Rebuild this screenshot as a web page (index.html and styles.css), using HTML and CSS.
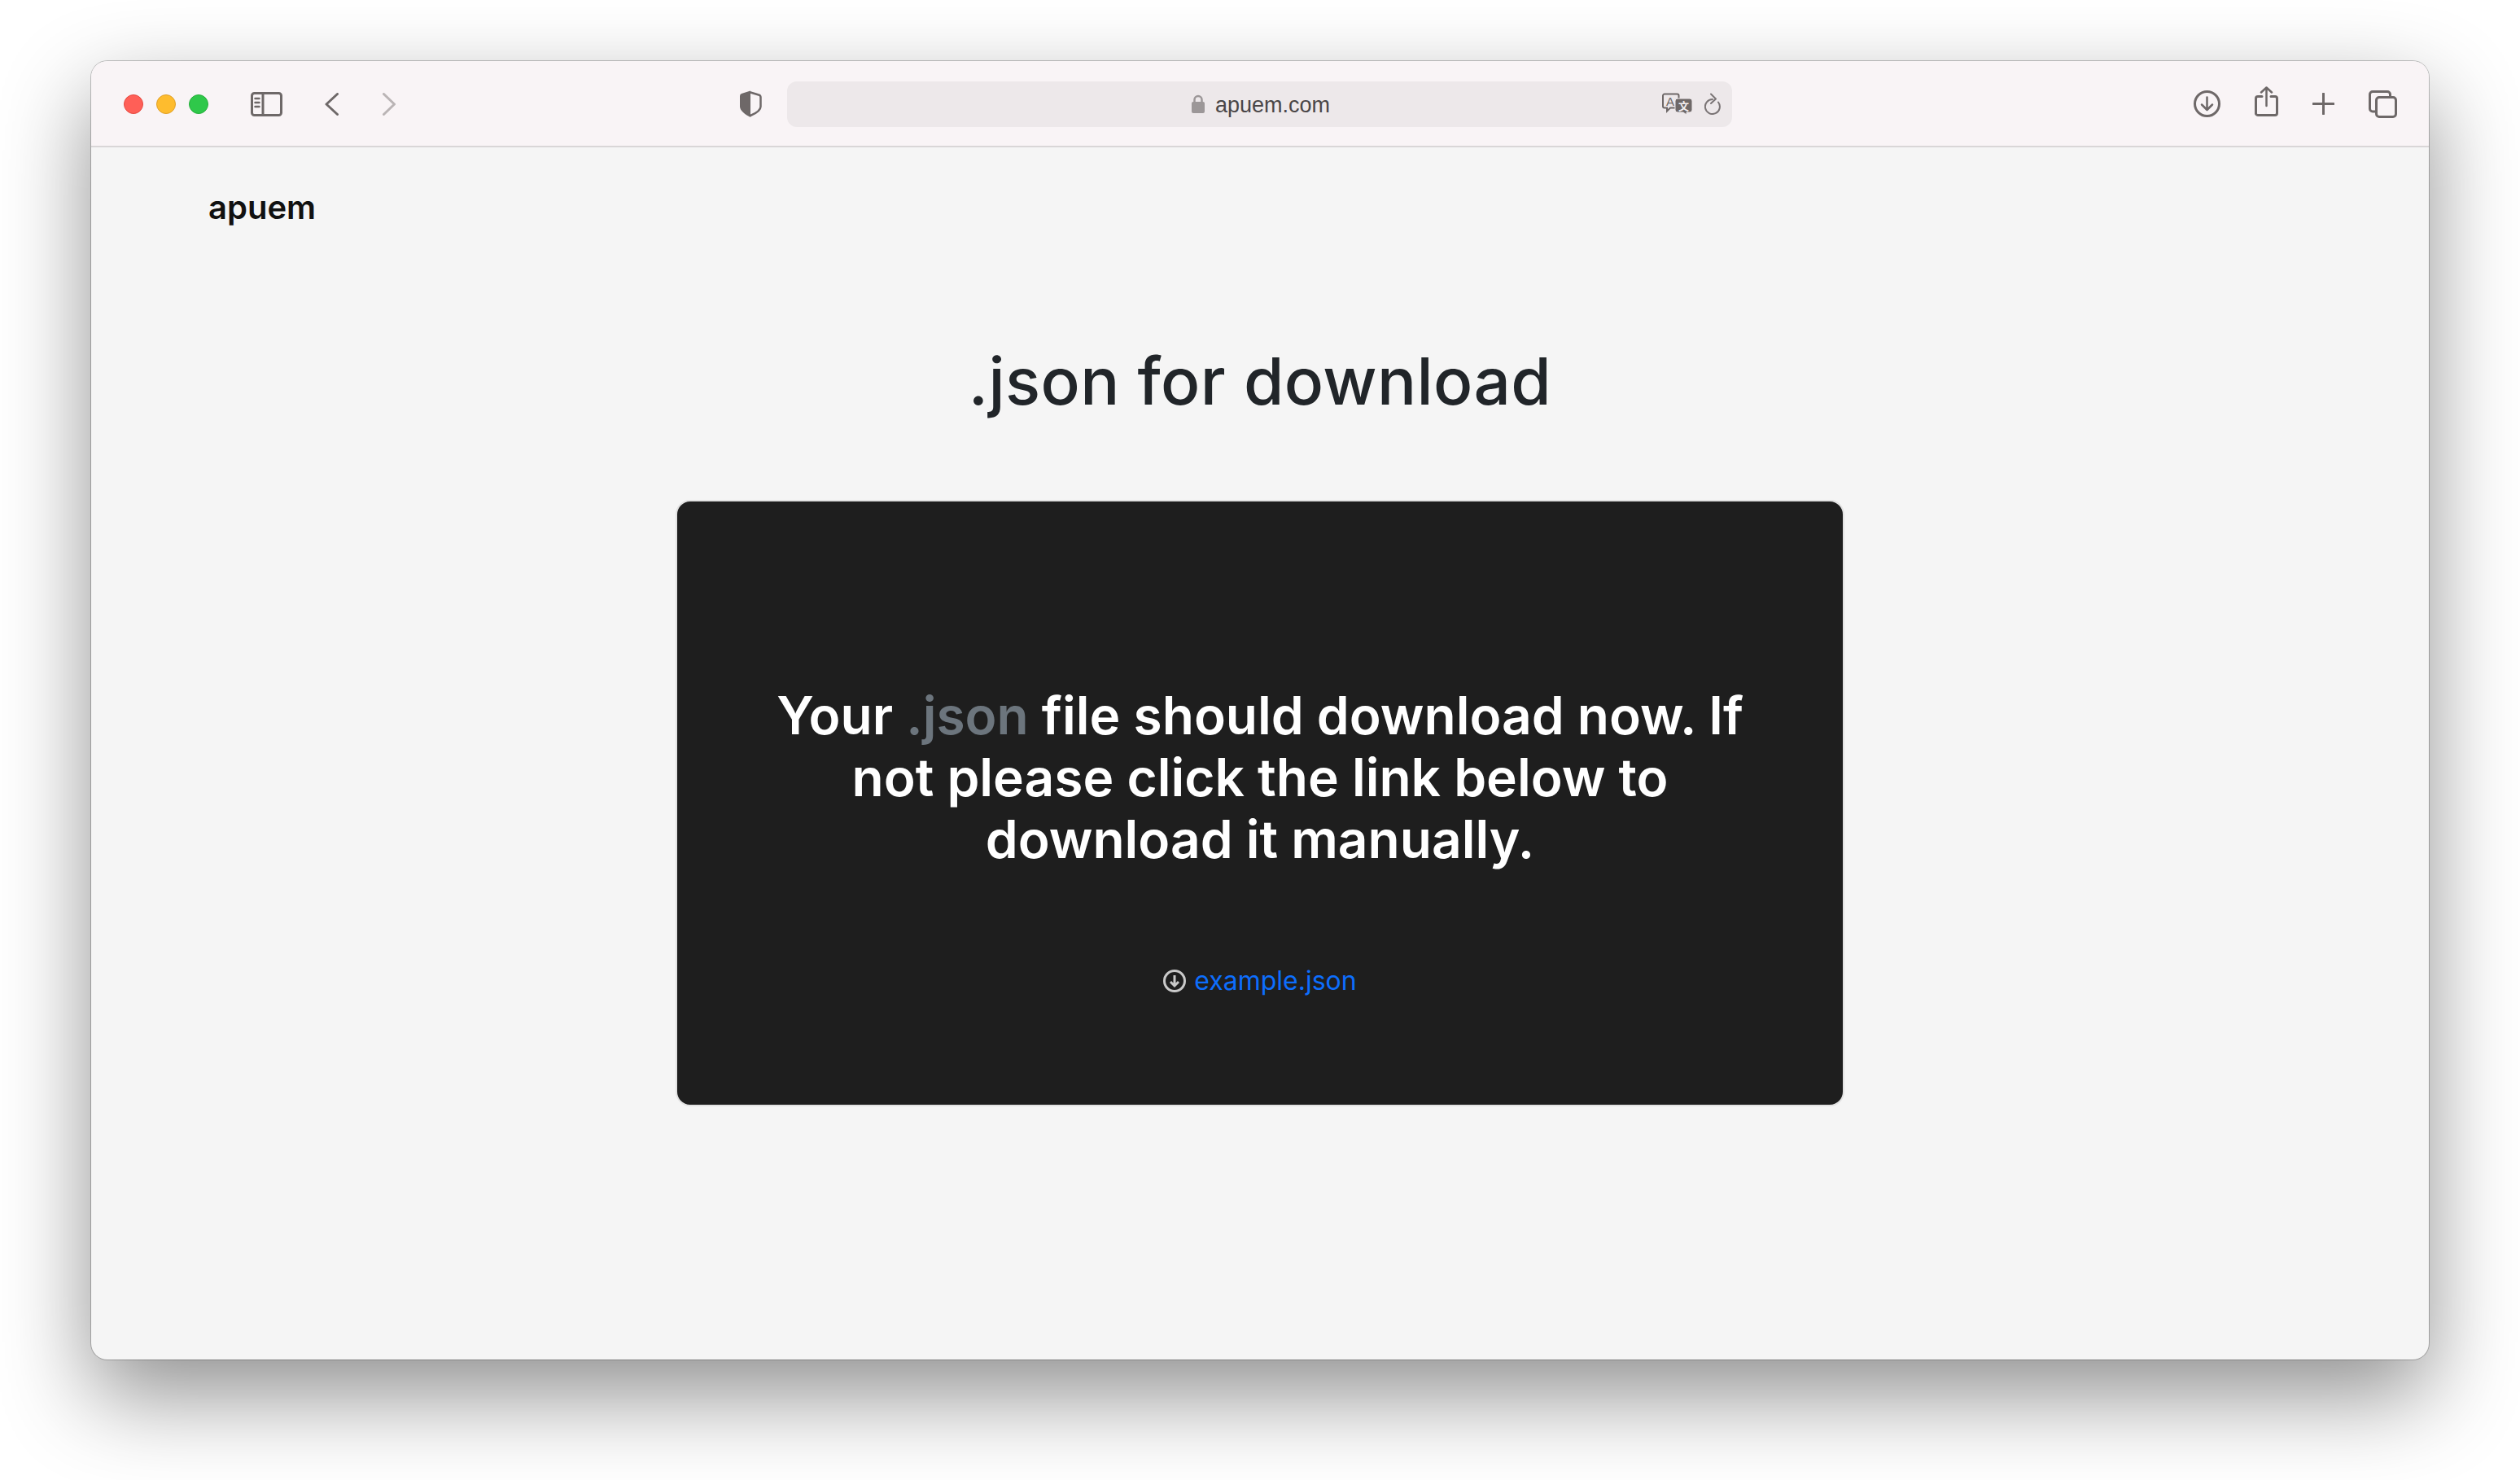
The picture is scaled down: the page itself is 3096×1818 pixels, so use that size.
FILE: index.html
```html
<!DOCTYPE html>
<html lang="en">
<head>
    <meta charset="UTF-8">
    <meta name="viewport" content="width=device-width, initial-scale=1.0">
    <title>.json for download</title>
    <link rel="stylesheet" href="styles.css">
</head>
<body>
    <div class="window">
        <div class="toolbar">
            <div class="lights">
                <span class="light red"></span>
                <span class="light yellow"></span>
                <span class="light green"></span>
            </div>
            <svg class="icon sidebar" width="39" height="30" viewBox="0 0 39 30">
                <rect x="1.5" y="1.5" width="36" height="27" rx="3"/>
                <path d="M15 1.5v27"/>
                <path class="thin" d="M5.5 8h5M5.5 13h5M5.5 18h5"/>
            </svg>
            <svg class="icon back" width="17" height="28" viewBox="0 0 17 28">
                <path d="M15.5 1.5L2 14l13.5 12.5"/>
            </svg>
            <svg class="icon forward" width="16" height="28" viewBox="0 0 16 28">
                <path d="M1.5 1.5L14.5 14 1.5 26.5"/>
            </svg>
            <svg class="icon shield" width="28" height="33" viewBox="0 0 28 33">
                <path class="solid" d="M14 .5L3 4Q1 4.500 1 7v13c0 5 7 10 13 13z"/>
                <path class="thin" d="M14 2.500l10 3q2.500 .5 2.500 3V20c0 5-6.500 8.500-12.500 11"/>
            </svg>
            <div class="urlbar">
                <svg class="lock" width="16" height="23" viewBox="0 0 16 23">
                    <path class="shackle" d="M3.500 10V6.500a4.500 4.500 0 0 1 9 0V10"/>
                    <rect y="9" width="16" height="14" rx="2"/>
                </svg>
                <span class="address">apuem.com</span>
                <svg class="translate" width="37" height="27" viewBox="0 0 37 27">
                    <path class="bubble" d="M3 1.500h15.500a2 2 0 0 1 2 2v13a2 2 0 0 1-2 2H10l-4 4v-4H3a2 2 0 0 1-2-2v-13a2 2 0 0 1 2-2z"/>
                    <text class="glyph-a" x="10" y="15.500">A</text>
                    <path class="bubble-dark" d="M19 7h15a3 3 0 0 1 3 3v11a3 3 0 0 1-3 3h-4v3l-4-3h-7a3 3 0 0 1-3-3V10a3 3 0 0 1 3-3z"/>
                    <text class="glyph-zh" x="26.500" y="20.500">文</text>
                </svg>
                <svg class="icon reload" width="20" height="27" viewBox="0 0 20 27">
                    <path d="M10 8A9 9 0 1 0 17 11.500"/>
                    <path d="M8 1.500l6 6-6 5.500"/>
                </svg>
            </div>
            <div class="actions">
                <svg class="icon" width="33" height="33" viewBox="0 0 33 33">
                    <circle cx="16.500" cy="16.500" r="15"/>
                    <path class="thin" d="M16.500 8.500v15M10 17.500l6.500 6.500 6.500-6.500"/>
                </svg>
                <svg class="icon share" width="29" height="37" viewBox="0 0 29 37">
                    <path d="M9 12.500H4a2.500 2.500 0 0 0-2.500 2.500v17.500A2.500 2.500 0 0 0 4 35.500h21a2.500 2.500 0 0 0 2.500-2.500V15a2.500 2.500 0 0 0-2.500-2.500h-5"/>
                    <path class="thin" d="M14.500 24V2M8 7.500L14.500 1.500 21 7.500"/>
                </svg>
                <svg class="icon plus" width="27" height="27" viewBox="0 0 27 27">
                    <path d="M13.500 1v25M1 13.500h25"/>
                </svg>
                <svg class="icon tabs" width="35" height="34" viewBox="0 0 35 34">
                    <path d="M8 26H5a3.500 3.500 0 0 1-3.500-3.500V5A3.500 3.500 0 0 1 5 1.500h18A3.500 3.500 0 0 1 26.500 5v3"/>
                    <rect x="9.500" y="8.500" width="24" height="24" rx="3.500"/>
                </svg>
            </div>
        </div>
        <div class="page">
            <a class="brand">apuem</a>
            <h1 class="title">.json for download</h1>
            <div class="card">
                <h2 class="message">Your <span class="muted">.json</span> file should download now. If not please click the link below to download it manually.</h2>
                <p class="file">
                    <svg class="file-icon" width="28" height="28" viewBox="0 0 28 28">
                        <circle cx="14" cy="14" r="12.500"/>
                        <path d="M14 7v13M9 15l5 5 5-5"/>
                    </svg>
                    <a class="file-link">example.json</a>
                </p>
            </div>
        </div>
    </div>
</body>
</html>
```

FILE: styles.css
```css
* {
    box-sizing: border-box;
}
body {
    margin: 0;
    height: 1818px;
    padding: 75px 112px 0 112px;
    background-color: #fff;
    font-family: Inter, "Liberation Sans", sans-serif;
    overflow: hidden;
}
.window {
    height: 1595px;
    border-radius: 20px;
    background-color: #f5f5f5;
    box-shadow: 0 0 0 1px rgba(0, 0, 0, 0.22), 0 44px 110px rgba(0, 0, 0, 0.44);
}

/* browser bar */
.toolbar {
    display: flex;
    align-items: center;
    height: 106px;
    padding: 1px 39px 0 40px;
    background-color: #f9f4f6;
    border-bottom: 2px solid #d9d6d7;
    border-radius: 20px 20px 0 0;
}
.lights {
    display: flex;
    gap: 16px;
}
.light {
    width: 24px;
    height: 24px;
    border-radius: 50%;
}
.red {
    background-color: #ff5f57;
    border: 1px solid #e5483f;
}
.yellow {
    background-color: #febc2e;
    border: 1px solid #e0a028;
}
.green {
    background-color: #2fc84a;
    border: 1px solid #27ae3c;
}
.icon {
    flex: none;
    fill: none;
    stroke: #6e6868;
    stroke-width: 3;
    stroke-linecap: round;
    stroke-linejoin: round;
}
.icon .thin {
    stroke-width: 2.5;
}
.icon .solid {
    fill: #6e6868;
    stroke: none;
}
.sidebar {
    margin-left: 52px;
}
.back {
    margin-left: 52px;
}
.forward {
    margin-left: 54px;
    opacity: 0.45;
}
.shield {
    margin-left: 422px;
}
.urlbar {
    display: flex;
    align-items: center;
    width: 1161px;
    height: 56px;
    margin-left: 31px;
    padding-left: 497px;
    background-color: #ede8ea;
    border-radius: 12px;
}
.lock {
    flex: none;
    fill: #9c9798;
}
.lock .shackle {
    fill: none;
    stroke: #9c9798;
    stroke-width: 2.5;
}
.address {
    margin: 4px 0 0 13px;
    font-family: "Liberation Sans", Arial, sans-serif;
    font-size: 27px;
    color: #4a4647;
}
.translate {
    flex: none;
    margin-left: 408px;
}
.bubble {
    fill: none;
    stroke: #6e6868;
    stroke-width: 2;
}
.bubble-dark {
    fill: #6e6868;
    stroke: #ede8ea;
    stroke-width: 1;
}
.glyph-a {
    font-family: "Liberation Sans", sans-serif;
    font-size: 15px;
    text-anchor: middle;
    fill: #6e6868;
}
.glyph-zh {
    font-family: "Noto Sans CJK SC", sans-serif;
    font-size: 13px;
    font-weight: 700;
    text-anchor: middle;
    fill: #f4eff1;
}
.reload {
    margin-left: 15px;
    stroke-width: 2;
    stroke: #7a7475;
}
.actions {
    display: flex;
    align-items: center;
    gap: 42px;
    margin-left: auto;
}
.share {
    margin-bottom: 7px;
}

/* page */
.page {
    text-align: center;
    padding-top: 50px;
}
.brand {
    display: block;
    padding-left: 144px;
    text-align: left;
    font-size: 40px;
    line-height: 48px;
    font-weight: 600;
    color: #111;
}
.title {
    margin: 141px 0 0;
    font-size: 80px;
    line-height: 96px;
    font-weight: 500;
    letter-spacing: 0.4px;
    color: #212529;
}
.card {
    display: flex;
    flex-direction: column;
    align-items: center;
    justify-content: center;
    width: 1436px;
    height: 745px;
    margin: 98px auto 0;
    padding: 96px 100px 0;
    background-color: #1e1e1e;
    border: 2px solid #e2e2e2;
    border-radius: 18px;
}
.message {
    margin: 0;
    font-size: 64px;
    line-height: 76px;
    font-weight: 600;
    color: #fff;
}
.muted {
    color: #6c757d;
}
.file {
    display: flex;
    align-items: center;
    gap: 10px;
    margin: 112px 0 0;
    font-size: 32px;
    line-height: 48px;
}
.file-icon {
    fill: none;
    stroke: #c9c9c9;
    stroke-width: 3;
}
.file-link {
    color: #0d6efd;
}
```
